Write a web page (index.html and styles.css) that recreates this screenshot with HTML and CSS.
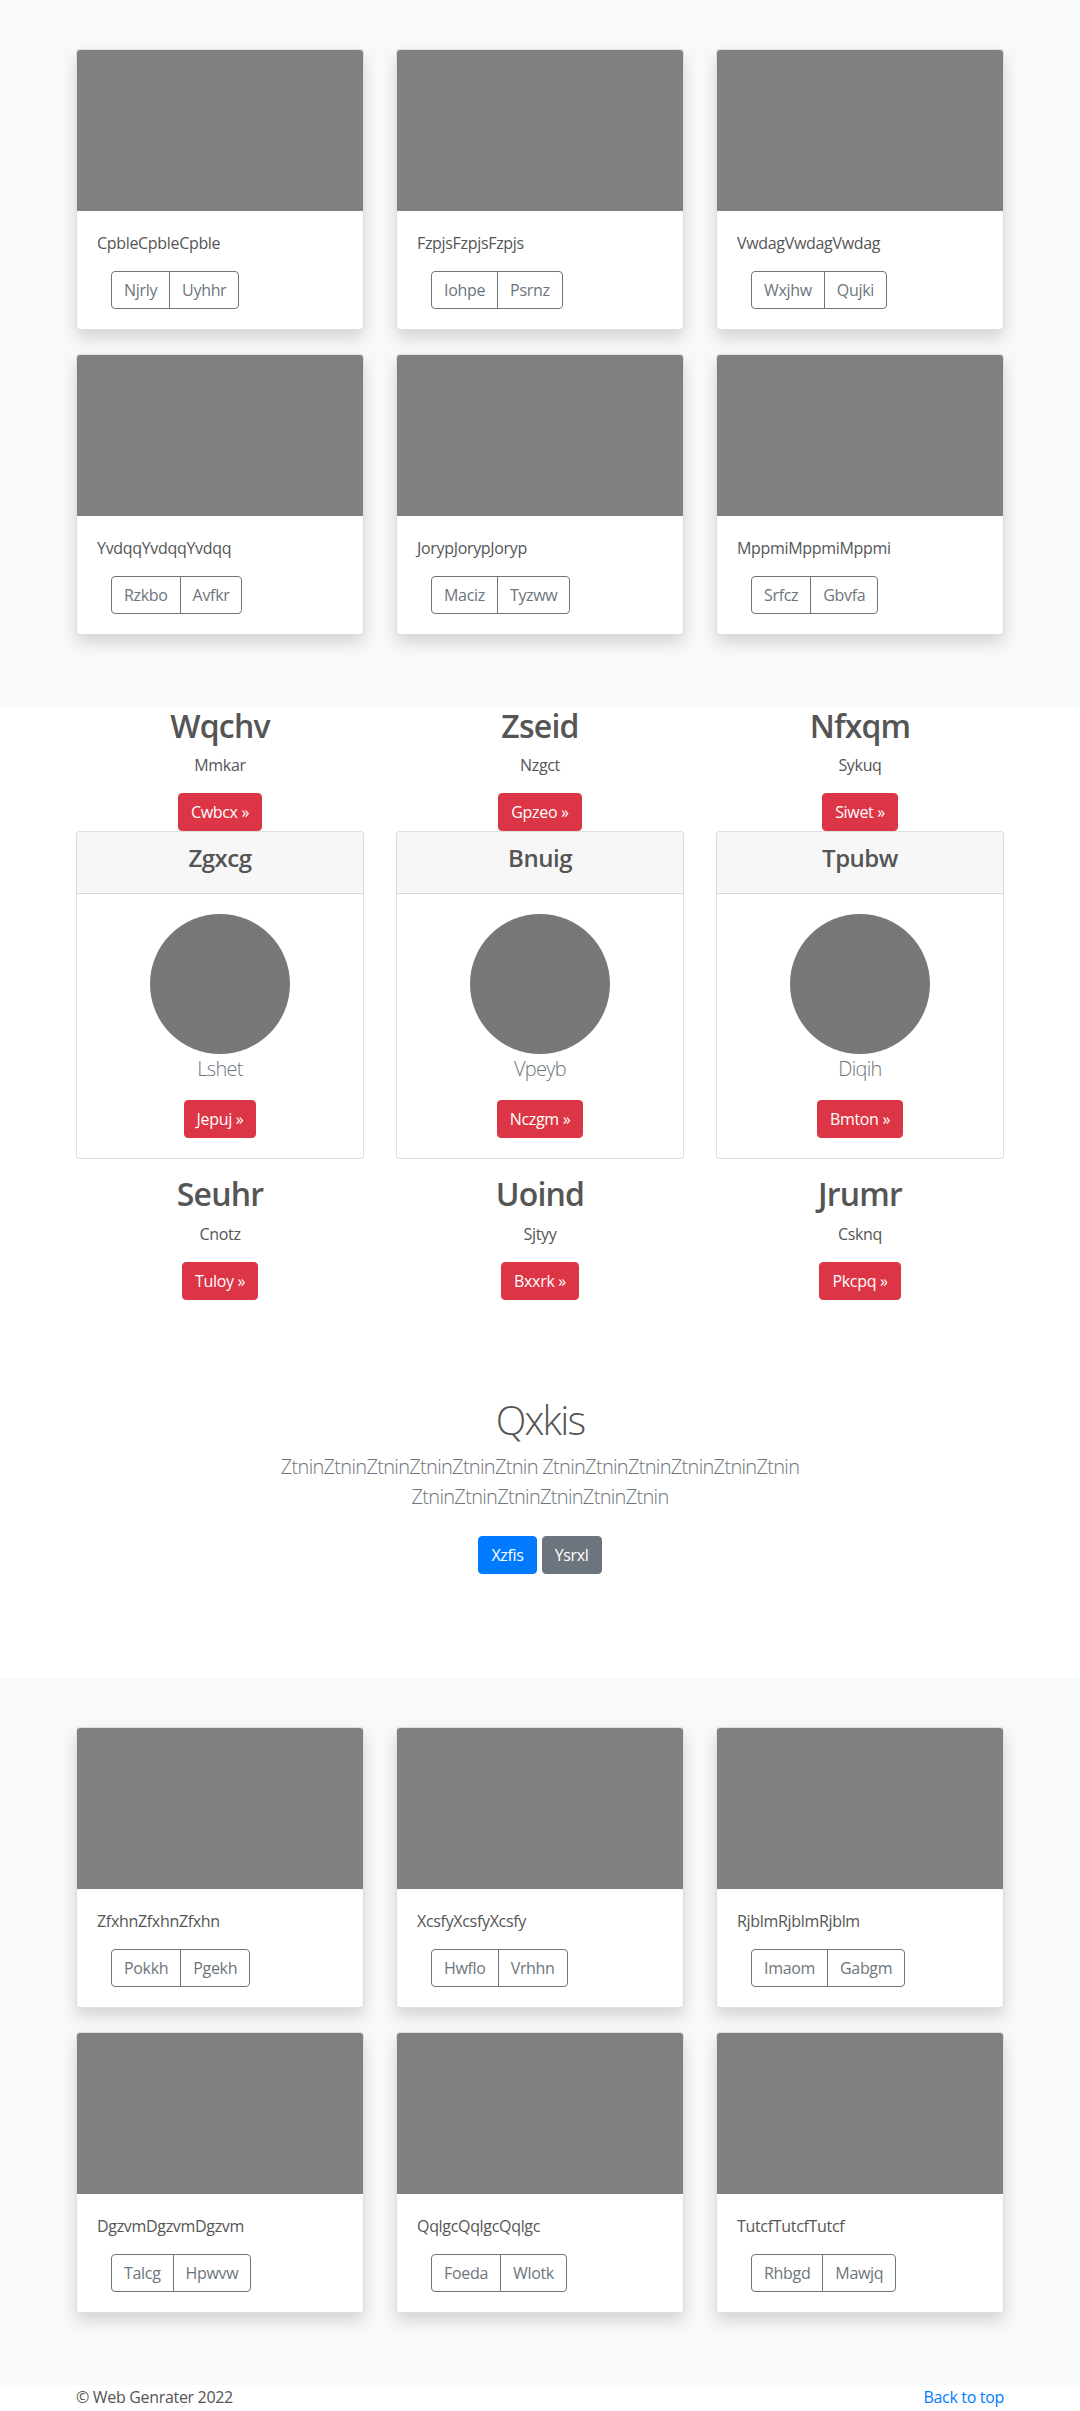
FILE: index.html
```html
<!DOCTYPE html>
<html lang="en">
<head>
<meta charset="utf-8">
<title>Web Genrater</title>
<link rel="stylesheet" href="styles.css">
</head>
<body>
<section class="album">
  <div class="container grid3">
    <div class="acard"><div class="thumb"></div><div class="acard-body"><p class="acard-text">CpbleCpbleCpble</p><div class="btn-group"><a class="btn-o first">Njrly</a><a class="btn-o last">Uyhhr</a></div></div></div>
    <div class="acard"><div class="thumb"></div><div class="acard-body"><p class="acard-text">FzpjsFzpjsFzpjs</p><div class="btn-group"><a class="btn-o first">Iohpe</a><a class="btn-o last">Psrnz</a></div></div></div>
    <div class="acard"><div class="thumb"></div><div class="acard-body"><p class="acard-text">VwdagVwdagVwdag</p><div class="btn-group"><a class="btn-o first">Wxjhw</a><a class="btn-o last">Qujki</a></div></div></div>
    <div class="acard"><div class="thumb"></div><div class="acard-body"><p class="acard-text">YvdqqYvdqqYvdqq</p><div class="btn-group"><a class="btn-o first">Rzkbo</a><a class="btn-o last">Avfkr</a></div></div></div>
    <div class="acard"><div class="thumb"></div><div class="acard-body"><p class="acard-text">JorypJorypJoryp</p><div class="btn-group"><a class="btn-o first">Maciz</a><a class="btn-o last">Tyzww</a></div></div></div>
    <div class="acard"><div class="thumb"></div><div class="acard-body"><p class="acard-text">MppmiMppmiMppmi</p><div class="btn-group"><a class="btn-o first">Srfcz</a><a class="btn-o last">Gbvfa</a></div></div></div>
  </div>
</section>

<section class="features">
  <div class="container">
    <div class="grid3">
      <div class="feature"><h2>Wqchv</h2><p>Mmkar</p><div><a class="btn btn-danger">Cwbcx »</a></div></div>
      <div class="feature"><h2>Zseid</h2><p>Nzgct</p><div><a class="btn btn-danger">Gpzeo »</a></div></div>
      <div class="feature"><h2>Nfxqm</h2><p>Sykuq</p><div><a class="btn btn-danger">Siwet »</a></div></div>
    </div>
    <div class="grid3">
      <div class="pcard"><div class="pcard-header"><h4>Zgxcg</h4></div><div class="pcard-body"><svg class="avatar" width="140" height="140" viewBox="0 0 140 140"><circle cx="70" cy="70" r="70" fill="#777"/></svg><p class="lead">Lshet</p><a class="btn btn-danger">Jepuj »</a></div></div>
      <div class="pcard"><div class="pcard-header"><h4>Bnuig</h4></div><div class="pcard-body"><svg class="avatar" width="140" height="140" viewBox="0 0 140 140"><circle cx="70" cy="70" r="70" fill="#777"/></svg><p class="lead">Vpeyb</p><a class="btn btn-danger">Nczgm »</a></div></div>
      <div class="pcard"><div class="pcard-header"><h4>Tpubw</h4></div><div class="pcard-body"><svg class="avatar" width="140" height="140" viewBox="0 0 140 140"><circle cx="70" cy="70" r="70" fill="#777"/></svg><p class="lead">Diqih</p><a class="btn btn-danger">Bmton »</a></div></div>
    </div>
    <div class="grid3">
      <div class="feature"><h2>Seuhr</h2><p>Cnotz</p><div><a class="btn btn-danger">Tuloy »</a></div></div>
      <div class="feature"><h2>Uoind</h2><p>Sjtyy</p><div><a class="btn btn-danger">Bxxrk »</a></div></div>
      <div class="feature"><h2>Jrumr</h2><p>Csknq</p><div><a class="btn btn-danger">Pkcpq »</a></div></div>
    </div>
  </div>
</section>

<section class="jumbo">
  <div class="container">
    <h1>Qxkis</h1>
    <p class="lead jumbo-lead">ZtninZtninZtninZtninZtninZtnin ZtninZtninZtninZtninZtninZtnin ZtninZtninZtninZtninZtninZtnin</p>
    <div class="jumbo-actions"><a class="btn btn-primary">Xzfis</a><a class="btn btn-secondary">Ysrxl</a></div>
  </div>
</section>

<section class="album">
  <div class="container grid3">
    <div class="acard"><div class="thumb"></div><div class="acard-body"><p class="acard-text">ZfxhnZfxhnZfxhn</p><div class="btn-group"><a class="btn-o first">Pokkh</a><a class="btn-o last">Pgekh</a></div></div></div>
    <div class="acard"><div class="thumb"></div><div class="acard-body"><p class="acard-text">XcsfyXcsfyXcsfy</p><div class="btn-group"><a class="btn-o first">Hwflo</a><a class="btn-o last">Vrhhn</a></div></div></div>
    <div class="acard"><div class="thumb"></div><div class="acard-body"><p class="acard-text">RjblmRjblmRjblm</p><div class="btn-group"><a class="btn-o first">Imaom</a><a class="btn-o last">Gabgm</a></div></div></div>
    <div class="acard"><div class="thumb"></div><div class="acard-body"><p class="acard-text">DgzvmDgzvmDgzvm</p><div class="btn-group"><a class="btn-o first">Talcg</a><a class="btn-o last">Hpwvw</a></div></div></div>
    <div class="acard"><div class="thumb"></div><div class="acard-body"><p class="acard-text">QqlgcQqlgcQqlgc</p><div class="btn-group"><a class="btn-o first">Foeda</a><a class="btn-o last">Wlotk</a></div></div></div>
    <div class="acard"><div class="thumb"></div><div class="acard-body"><p class="acard-text">TutcfTutcfTutcf</p><div class="btn-group"><a class="btn-o first">Rhbgd</a><a class="btn-o last">Mawjq</a></div></div></div>
  </div>
</section>

<footer class="footer">
  <div class="container footer-row">
    <p class="copy">© Web Genrater 2022</p>
    <a class="back-top">Back to top</a>
  </div>
</footer>
</body>
</html>
```

FILE: styles.css
```css
* { box-sizing: border-box; }

body {
  margin: 0;
  font-family: "Open Sans", "Noto Sans", "DejaVu Sans", sans-serif;
  font-size: 16px;
  line-height: 1.5;
  letter-spacing: -0.02em;
  color: #555;
  background: #fff;
}

p { margin: 0 0 16px; }

.container {
  width: 928px;
  margin: 0 auto;
}

.grid3 {
  display: grid;
  grid-template-columns: repeat(3, 288px);
  column-gap: 32px;
}

/* album sections */
.album {
  background: #f8f9fa;
  padding: 49px 0 48px;
}

.acard {
  background: #fff;
  border: 1px solid rgba(0, 0, 0, .125);
  border-radius: 4px;
  box-shadow: 0 8px 16px rgba(0, 0, 0, .15);
  margin-bottom: 24px;
  overflow: hidden;
}

.thumb {
  height: 161px;
  background: #808080;
}

.acard-body { padding: 20px; }

.acard-text { margin: 0 0 16px; }

.btn-group {
  display: inline-flex;
  margin-left: 14px;
}

.btn-o {
  display: inline-block;
  padding: 6px 12px;
  border: 1px solid #6c757d;
  color: #6c757d;
  line-height: 24px;
  font-size: 16px;
}

.btn-o.first { border-radius: 4px 0 0 4px; }
.btn-o.last { border-radius: 0 4px 4px 0; margin-left: -1px; }

/* buttons */
.btn {
  display: inline-block;
  padding: 6px 12px;
  border: 1px solid transparent;
  border-radius: 4px;
  font-size: 16px;
  line-height: 24px;
  color: #fff;
  text-decoration: none;
}

.btn-danger { background: #dc3545; border-color: #dc3545; }
.btn-primary { background: #007bff; border-color: #007bff; }
.btn-secondary { background: #6c757d; border-color: #6c757d; }

/* features */
.features { background: #fff; }

.feature { text-align: center; }

.feature h2 {
  margin: 0 0 8px;
  font-size: 32px;
  line-height: 1.2;
  font-weight: 600;
  letter-spacing: -0.025em;
  color: #555;
}

.feature p { margin: 0 0 16px; }

.pcard {
  border: 1px solid rgba(0, 0, 0, .125);
  border-radius: 4px;
  background: #fff;
  margin-bottom: 16px;
  text-align: center;
  overflow: hidden;
}

.pcard-header {
  padding: 12px 20px;
  background: rgba(0, 0, 0, .03);
  border-bottom: 1px solid rgba(0, 0, 0, .125);
}

.pcard-header h4 {
  margin: 0 0 8px;
  font-size: 24px;
  line-height: 1.2;
  font-weight: 600;
  letter-spacing: -0.02em;
  color: #555;
}

.pcard-body { padding: 20px; }

.avatar {
  display: block;
  margin: 0 auto;
}

.lead {
  font-size: 20px;
  font-weight: 300;
  line-height: 30px;
  letter-spacing: -0.035em;
  color: #6c757d;
  margin: 0 0 16px;
}

/* jumbotron */
.jumbo {
  padding: 96px 0;
  text-align: center;
  background: #fff;
}

.jumbo h1 {
  margin: 0 0 8px;
  font-size: 40px;
  line-height: 1.2;
  font-weight: 300;
  letter-spacing: -0.045em;
  color: #555;
}

.jumbo-lead {
  max-width: 608px;
  margin: 0 auto 16px;
}

.jumbo-actions {
  display: flex;
  justify-content: center;
  gap: 5px;
  padding: 8px 0;
}

/* footer */
.footer {
  background: #fff;
  padding-bottom: 48px;
}

.footer-row {
  display: flex;
  justify-content: space-between;
  align-items: flex-start;
}

.copy {
  margin: 0;
  color: #555;
}

.back-top {
  color: #007bff;
  text-decoration: none;
}
```
